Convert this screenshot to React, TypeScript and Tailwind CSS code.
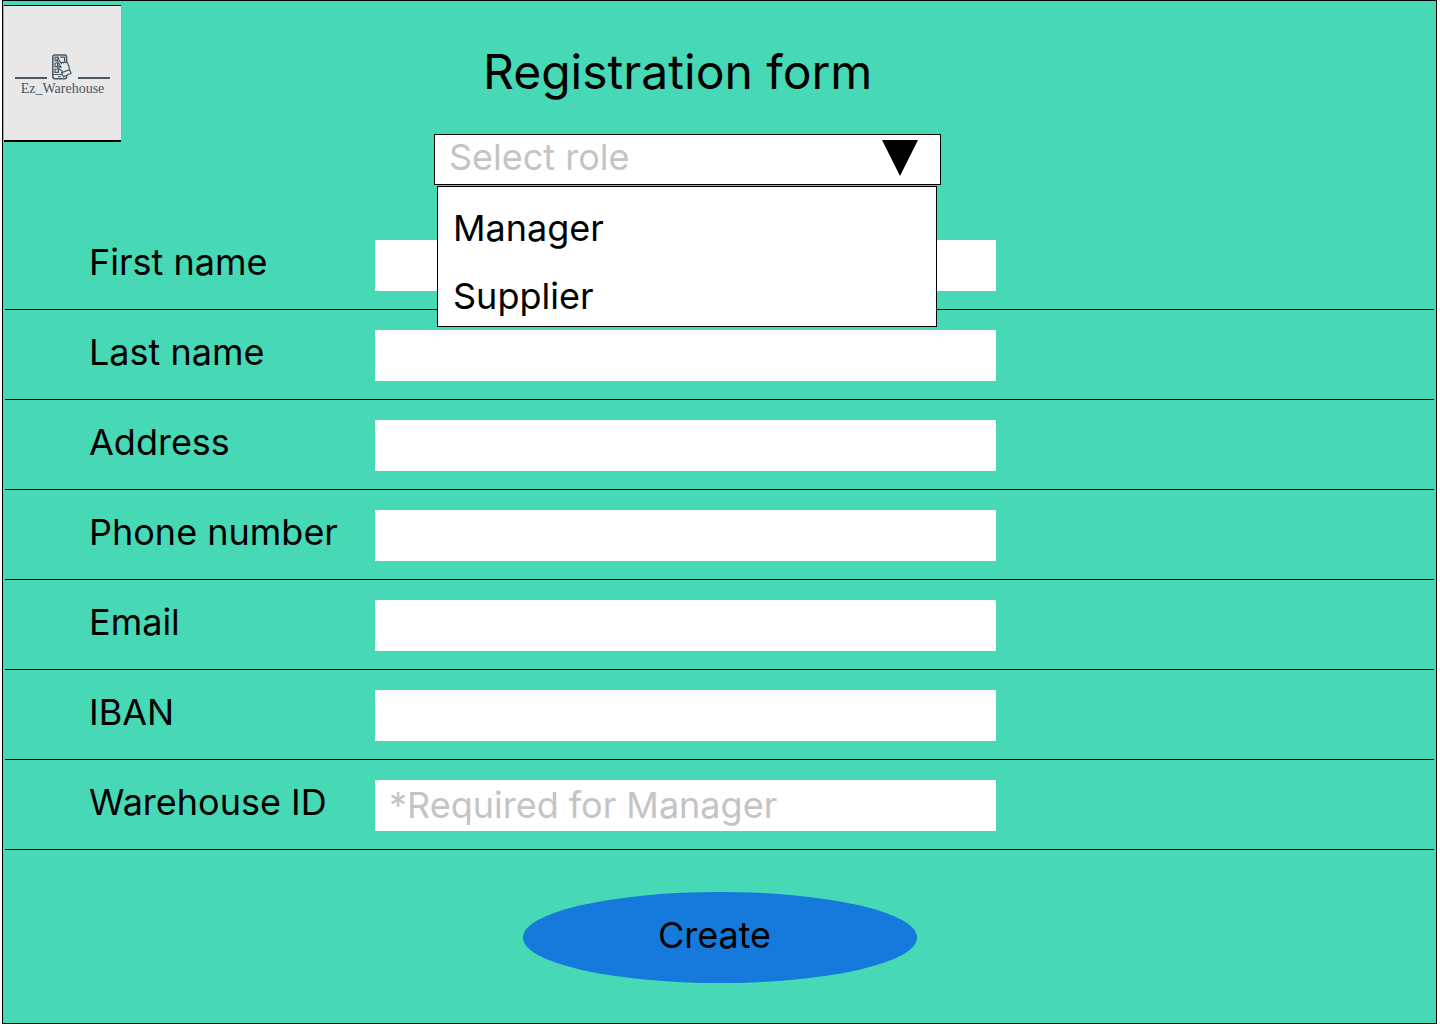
import { useState } from "react";

const fields = [
  { id: "first-name", label: "First name", type: "text" },
  { id: "last-name", label: "Last name", type: "text" },
  { id: "address", label: "Address", type: "text" },
  { id: "phone", label: "Phone number", type: "tel" },
  { id: "email", label: "Email", type: "email" },
  { id: "iban", label: "IBAN", type: "text" },
  {
    id: "warehouse-id",
    label: "Warehouse ID",
    type: "text",
    placeholder: "*Required for Manager",
  },
];

const roles = ["Manager", "Supplier"];

function PhoneTapIcon() {
  return (
    <svg
      className="mr-0.5 h-[26px] w-5"
      viewBox="0 0 20 26"
      fill="none"
      stroke="#4a5660"
      strokeLinecap="round"
      strokeLinejoin="round"
      aria-hidden="true"
    >
      <rect x="0.8" y="1" width="13.8" height="23.8" rx="2" strokeWidth="1.5" />
      <path d="M1 20.5h13.4M6.6 22.7h1.6" strokeWidth="1.2" />
      <path d="M3 3.2h3.4v3.4H3zM8.4 3.2h4.2v4.2M3 9h2.6v3.6H3zM3 15h3.4v3.4H3z" strokeWidth="1.2" />
      <path
        d="M10.2 17.2 L6.2 14.2 C5 13.2 6 12.1 7.2 12.6 L9 13.4 L4.9 6.4 C4.5 5 5.9 4.5 6.6 5.6 L9.4 9.6 C9.2 8.2 10.6 7.8 11.3 8.9 C11.6 7.7 12.9 7.6 13.5 8.7 C14.2 7.9 15.3 8.2 15.7 9.2 L17.2 13.2 V16.4"
        fill="#e8e8e8"
        strokeWidth="1.2"
      />
      <path d="M9.6 18.6 17.6 15.8 19.2 19.2 11.4 22.8Z" fill="#e8e8e8" strokeWidth="1.2" />
    </svg>
  );
}

function Logo() {
  return (
    <a
      href="#"
      aria-label="Ez_Warehouse"
      className="mt-1 ml-px flex h-[137px] w-[117px] shrink-0 flex-col items-center border-t border-b-2 border-black bg-[#e8e8e8] pt-12"
    >
      <span className="flex w-[95px] items-end justify-between">
        <span className="mb-px h-0.5 w-8 bg-[#4a5660]" />
        <PhoneTapIcon />
        <span className="mb-px h-0.5 w-8 bg-[#4a5660]" />
      </span>
      <span className="mt-px font-['Liberation_Serif',serif] text-[14px] leading-4 text-[#4a5660]">
        Ez_Warehouse
      </span>
    </a>
  );
}

function RoleSelect() {
  const [open, setOpen] = useState(true);
  const [role, setRole] = useState("");

  return (
    <div className="relative w-full max-w-[507px]">
      <select
        aria-label="Role"
        value={role}
        onChange={(event) => setRole(event.target.value)}
        onMouseDown={(event) => {
          event.preventDefault();
          setOpen(!open);
        }}
        className={`block h-[51px] w-full appearance-none rounded-none border border-black bg-white pb-2 pl-3.5 leading-[44px] outline-none ${
          role ? "text-black" : "text-[#c4c4c4]"
        }`}
      >
        <option value="">Select role</option>
        {roles.map((name) => (
          <option key={name}>{name}</option>
        ))}
      </select>
      <svg
        className="pointer-events-none absolute top-1.5 right-[23px] h-9 w-9"
        viewBox="0 0 36 36"
        aria-hidden="true"
      >
        <path d="M0 0H36L18 36Z" />
      </svg>
      {open && (
        <ul className="absolute top-[52px] right-1 left-[3px] z-10 border border-black bg-white pt-[19px] pb-2">
          {roles.map((name) => (
            <li key={name} className="mb-6 last:mb-0">
              <button
                type="button"
                className="block w-full pl-[15px] text-left"
                onClick={() => {
                  setRole(name);
                  setOpen(false);
                }}
              >
                {name}
              </button>
            </li>
          ))}
        </ul>
      )}
    </div>
  );
}

export default function App() {
  return (
    <div className="flex min-h-screen bg-white pr-[3px] pl-0.5 font-['Inter',sans-serif] text-[36px] leading-[44px] text-black">
      <main className="flex-1 border border-black bg-[#47d9b6]">
        <form onSubmit={(event) => event.preventDefault()}>
          <header className="flex h-[219px] items-start">
            <Logo />
            <div className="ml-[313px] flex-1 pt-[42px]">
              <h1 className="mb-[33px] pl-[49px] text-[48px] leading-[58px]">Registration form</h1>
              <RoleSelect />
            </div>
          </header>

          <div className="mx-0.5">
            {fields.map((field) => (
              <div
                key={field.id}
                className="flex h-[90px] items-start border-b border-black pt-5 pl-[84px]"
              >
                <label htmlFor={field.id} className="w-[286px] shrink-0">
                  {field.label}
                </label>
                <input
                  id={field.id}
                  type={field.type}
                  placeholder={field.placeholder}
                  className="h-[51px] w-full max-w-[621px] rounded-none bg-white px-3.5 pb-0.5 outline-none placeholder:text-[#c4c4c4]"
                />
              </div>
            ))}
          </div>

          <div className="flex justify-center pt-[42px] pb-10">
            <button
              type="submit"
              className="h-[91px] w-[394px] rounded-[50%] bg-[#157adc] pr-2.5 pb-1.5"
            >
              Create
            </button>
          </div>
        </form>
      </main>
    </div>
  );
}
